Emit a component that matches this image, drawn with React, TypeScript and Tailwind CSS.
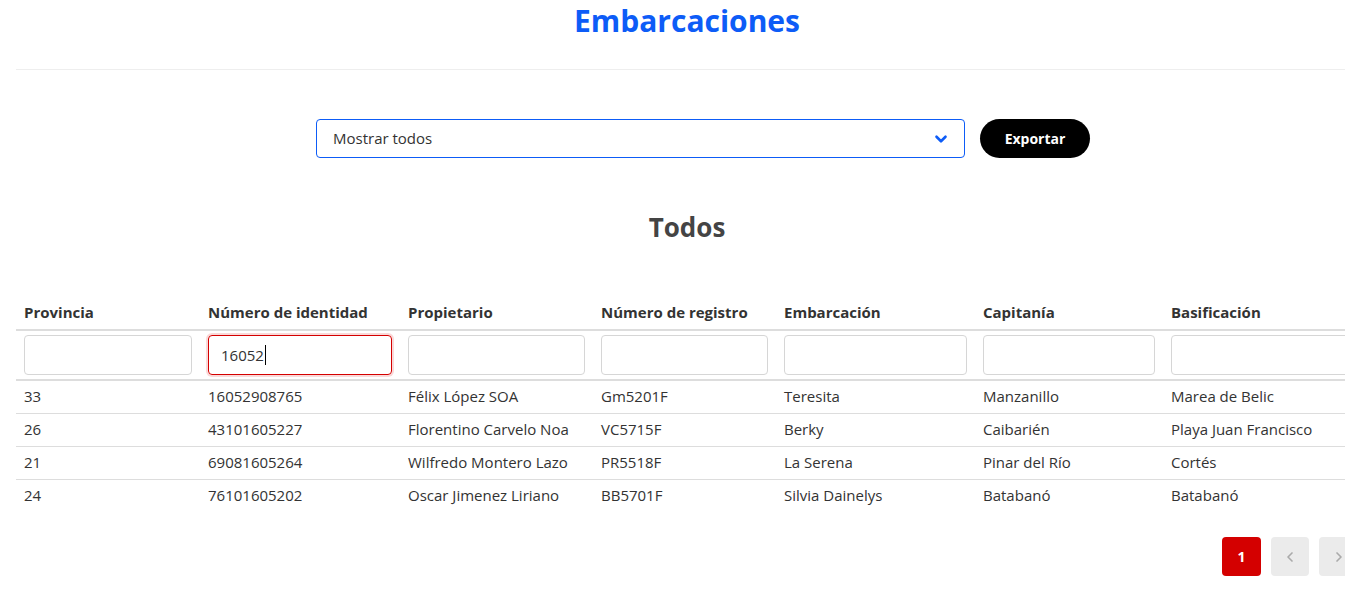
import { ChevronDown, ChevronLeft, ChevronRight } from "lucide-react";

type Row = {
  provincia: string;
  identidad: string;
  propietario: string;
  registro: string;
  embarcacion: string;
  capitania: string;
  basificacion: string;
};

const COLUMNS = [
  { label: "Provincia", width: "w-[184px]" },
  { label: "Número de identidad", width: "w-[200px]" },
  { label: "Propietario", width: "w-[193px]" },
  { label: "Número de registro", width: "w-[183px]" },
  { label: "Embarcación", width: "w-[199px]" },
  { label: "Capitanía", width: "w-[188px]" },
  { label: "Basificación", width: "w-[195px]" },
];

const ROWS: Row[] = [
  {
    provincia: "33",
    identidad: "16052908765",
    propietario: "Félix López SOA",
    registro: "Gm5201F",
    embarcacion: "Teresita",
    capitania: "Manzanillo",
    basificacion: "Marea de Belic",
  },
  {
    provincia: "26",
    identidad: "43101605227",
    propietario: "Florentino Carvelo Noa",
    registro: "VC5715F",
    embarcacion: "Berky",
    capitania: "Caibarién",
    basificacion: "Playa Juan Francisco",
  },
  {
    provincia: "21",
    identidad: "69081605264",
    propietario: "Wilfredo Montero Lazo",
    registro: "PR5518F",
    embarcacion: "La Serena",
    capitania: "Pinar del Río",
    basificacion: "Cortés",
  },
  {
    provincia: "24",
    identidad: "76101605202",
    propietario: "Oscar Jimenez Liriano",
    registro: "BB5701F",
    embarcacion: "Silvia Dainelys",
    capitania: "Batabanó",
    basificacion: "Batabanó",
  },
];

const FONT = "font-['Open_Sans',sans-serif]";

export default function App() {
  return (
    <div className={`h-[601px] w-[1345px] overflow-hidden bg-white text-[#333] ${FONT}`}>
      <div className="ml-4 w-[1342px]">
        <h1 className="pt-px text-center text-[30px] font-bold leading-[40px] text-[#0d5cf7]">
          Embarcaciones
        </h1>
        <div className="mt-[28px] h-px bg-[#eeeeee]" />

        <div className="mt-[49px] flex items-center gap-[15px] pl-[300px]">
          <div className="flex h-[39px] w-[649px] items-center justify-between rounded-[4px] border border-[#0d5cf7] pl-4 pr-[14px] text-[15px]">
            <span>Mostrar todos</span>
            <ChevronDown className="h-[18px] w-[18px] text-[#0d5cf7]" strokeWidth={3.5} />
          </div>
          <button
            type="button"
            className="h-[39px] w-[110px] rounded-full bg-black text-[14px] font-bold text-white"
          >
            Exportar
          </button>
        </div>

        <h2 className="mt-[53px] text-center text-[26px] font-bold leading-[32px] text-[#444]">
          Todos
        </h2>

        <table className="mt-[49px] table-fixed border-collapse text-[15px]">
          <thead>
            <tr className="border-b-2 border-[#dddddd]">
              {COLUMNS.map((col) => (
                <th
                  key={col.label}
                  className={`${col.width} px-2 pt-2 pb-[5px] text-left font-bold leading-6 text-[#333]`}
                >
                  {col.label}
                </th>
              ))}
            </tr>
            <tr className="border-b-2 border-[#dddddd]">
              {COLUMNS.map((col, index) => (
                <th key={col.label} className="px-2 py-1 font-normal">
                  {index === 1 ? (
                    <div className="flex h-10 items-center rounded-[4px] border border-[#d40000] px-3 text-left shadow-[0_0_0_2px_rgba(212,0,0,0.15)]">
                      <span>16052</span>
                      <span className="ml-px h-[20px] w-px bg-black" />
                    </div>
                  ) : (
                    <div className="h-10 rounded-[4px] border border-[#d6d6d6]" />
                  )}
                </th>
              ))}
            </tr>
          </thead>
          <tbody>
            {ROWS.map((row, index) => (
              <tr
                key={row.identidad}
                className={index < ROWS.length - 1 ? "border-b border-[#dddddd]" : ""}
              >
                {[
                  row.provincia,
                  row.identidad,
                  row.propietario,
                  row.registro,
                  row.embarcacion,
                  row.capitania,
                  row.basificacion,
                ].map((value, i) => (
                  <td key={i} className="whitespace-nowrap px-2 pt-[3px] pb-[5px] leading-6">
                    {value}
                  </td>
                ))}
              </tr>
            ))}
          </tbody>
        </table>

        <div className="mt-[25px] flex justify-end gap-[10px]">
          <button
            type="button"
            className="flex h-[39px] w-[39px] items-center justify-center rounded-[4px] bg-[#d40000] text-[14px] font-bold text-white"
          >
            1
          </button>
          <button
            type="button"
            className="flex h-[39px] w-[38px] items-center justify-center rounded-[4px] bg-[#ebebeb] text-[#aaaaaa]"
          >
            <ChevronLeft className="h-4 w-4" strokeWidth={2.5} />
          </button>
          <button
            type="button"
            className="flex h-[39px] w-[39px] items-center justify-center rounded-[4px] bg-[#ebebeb] text-[#aaaaaa]"
          >
            <ChevronRight className="h-4 w-4" strokeWidth={2.5} />
          </button>
        </div>
      </div>
    </div>
  );
}
